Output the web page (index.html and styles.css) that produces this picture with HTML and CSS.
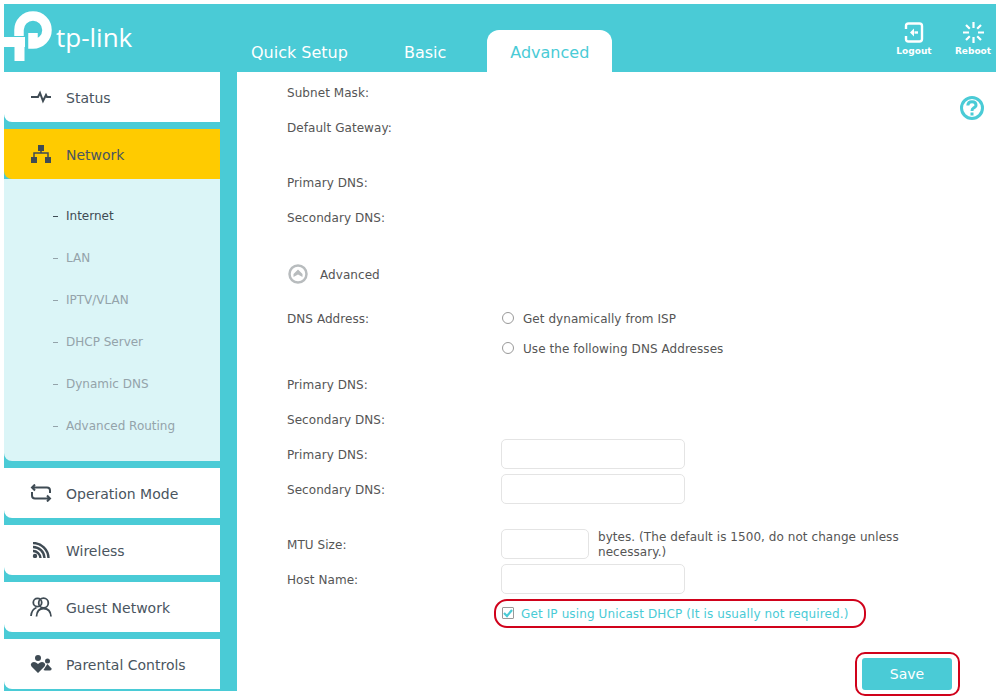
FILE: index.html
```html
<!DOCTYPE html>
<html lang="en">
<head>
    <meta charset="UTF-8">
    <title>TP-Link - Advanced - Internet</title>
    <link rel="stylesheet" href="styles.css">
</head>
<body>

    <header class="top-bar">
        <div class="logo">
            <svg class="logo-mark" width="50" height="56" viewBox="0 0 50 56">
                <path d="M0 37 H21 M15.500 37 V56" fill="none" stroke="#fff" stroke-width="10"/>
                <path d="M15 31 V25 A14 14 0 1 1 29 39 V28" fill="none" stroke="#fff" stroke-width="9.500"/>
            </svg>
            <span class="logo-text">tp-link</span>
        </div>

        <nav class="tabs">
            <a class="tab tab-quick">Quick Setup</a>
            <a class="tab tab-basic">Basic</a>
            <a class="tab tab-active">Advanced</a>
        </nav>

        <div class="top-actions">
            <a class="action">
                <svg width="20" height="21" viewBox="0 0 20 21" fill="none" stroke="#fff" stroke-width="2.400">
                    <path d="M2 7 V4 Q2 1.500 4.500 1.500 H15.500 Q18 1.500 18 4 V17 Q18 19.500 15.500 19.500 H4.500 Q2 19.500 2 17 V14"/>
                    <path d="M10 6.500 L6 10.500 L10 14.500 Z" fill="#fff" stroke="none"/>
                    <path d="M10.500 10.500 H14"/>
                </svg>
                <span>Logout</span>
            </a>
            <a class="action action-last">
                <svg width="21" height="21" viewBox="0 0 21 21" fill="none" stroke="#fff" stroke-width="2.200">
                    <path d="M10.500 0 V6 M10.500 15 V21 M0 10.500 H6 M15 10.500 H21 M3 3 L6.800 6.800 M18 3 L14.200 6.800 M3 18 L6.800 14.200 M18 18 L14.200 14.200"/>
                </svg>
                <span>Reboot</span>
            </a>
        </div>
    </header>

    <div class="layout">
        <aside class="sidebar">
            <a class="menu-item">
                <svg class="menu-icon" width="22" height="14" viewBox="0 0 22 14" fill="none" stroke="#3f4b54" stroke-width="2">
                    <path d="M1 7 H8 L10 3 L13 11 L16 5 L17 7 H21"/>
                </svg>
                <span class="menu-text">Status</span>
            </a>

            <a class="menu-item menu-item-active">
                <svg class="menu-icon" width="22" height="18" viewBox="0 0 22 18">
                    <path d="M8 0 H14 V6 H8 Z M1 12 H7 V18 H1 Z M15 12 H21 V18 H15 Z" fill="#3f4b54"/>
                    <path d="M4 12 V8 H18 V12 M11 6 V8" fill="none" stroke="#3f4b54" stroke-width="1.500"/>
                </svg>
                <span class="menu-text">Network</span>
            </a>
            <ul class="submenu">
                <li class="submenu-active">Internet</li>
                <li>LAN</li>
                <li>IPTV/VLAN</li>
                <li>DHCP Server</li>
                <li>Dynamic DNS</li>
                <li>Advanced Routing</li>
            </ul>

            <a class="menu-item">
                <svg class="menu-icon" width="22" height="18" viewBox="0 0 22 18" fill="none" stroke="#3f4b54" stroke-width="2">
                    <path d="M5 0.500 L2 3.500 L5 6.500 M2.500 3.500 H17 Q20 3.500 20 6.500 V9"/>
                    <path d="M2 8 V11.500 Q2 14.500 5 14.500 H19.500 M17 11.500 L20 14.500 L17 17.500"/>
                </svg>
                <span class="menu-text">Operation Mode</span>
            </a>
            <a class="menu-item">
                <svg class="menu-icon" width="22" height="16" viewBox="0 0 22 16" fill="none" stroke="#3f4b54" stroke-width="2.400">
                    <path d="M3 1 A15.500 15.500 0 0 1 18.500 16 M3 5 A11.500 11.500 0 0 1 14.500 16 M3 9 A7.500 7.500 0 0 1 10.500 16"/>
                    <circle cx="5" cy="14" r="2.200" fill="#3f4b54" stroke="none"/>
                </svg>
                <span class="menu-text">Wireless</span>
            </a>
            <a class="menu-item">
                <svg class="menu-icon" width="22" height="20" viewBox="0 0 22 20" fill="none" stroke="#3f4b54" stroke-width="1.800">
                    <circle cx="7.500" cy="5.500" r="4.200"/>
                    <circle cx="13.500" cy="6" r="4.800"/>
                    <path d="M1 19 Q1.500 12.500 6.500 10.500 M6.500 19.500 Q7 11.500 13.500 11.500 Q20.500 11.500 21 19.500"/>
                </svg>
                <span class="menu-text">Guest Network</span>
            </a>
            <a class="menu-item">
                <svg class="menu-icon" width="22" height="18" viewBox="0 0 22 18" fill="#3f4b54">
                    <circle cx="8" cy="3" r="3"/>
                    <path d="M8 18 L1.500 11.500 Q0 9.500 1.500 8 Q4.500 5.800 8 9 Q11.500 5.800 14.500 8 Q16 9.500 14.500 11.500 Z"/>
                    <circle cx="17.500" cy="6" r="2.500"/>
                    <path d="M17.500 9 L21.500 13.500 Q22 15.500 20 15.500 H15 L13.500 15 L16 11 Z"/>
                </svg>
                <span class="menu-text">Parental Controls</span>
            </a>
        </aside>

        <main class="content">
            <svg class="help" width="26" height="26" viewBox="0 0 26 26" fill="none" stroke="#4acbd6" stroke-width="3">
                <circle cx="13" cy="13" r="10.500"/>
                <path d="M8.800 10.500 Q9 6.800 13 6.800 Q17 6.800 17 10 Q17 12 14.500 13 Q13 13.800 13 16"/>
                <path d="M13 17.500 V20.500"/>
            </svg>

            <div class="row"><label class="field-label">Subnet Mask:</label></div>
            <div class="row"><label class="field-label">Default Gateway:</label></div>

            <div class="row row-group"><label class="field-label">Primary DNS:</label></div>
            <div class="row"><label class="field-label">Secondary DNS:</label></div>

            <div class="row row-advanced">
                <svg width="24" height="24" viewBox="0 0 24 24">
                    <circle cx="12" cy="12" r="8.500" fill="none" stroke="#b8bcbe" stroke-width="2.500"/>
                    <path d="M12 7.500 L16.500 12 V15 L12 12.500 L7.500 15 V12 Z" fill="#b8bcbe"/>
                </svg>
                <span class="field-text">Advanced</span>
            </div>

            <div class="row row-radio row-dns">
                <label class="field-label">DNS Address:</label>
                <label class="radio"><input type="radio" name="dns"><span class="field-text">Get dynamically from ISP</span></label>
            </div>
            <div class="row row-radio">
                <span class="field-label"></span>
                <label class="radio"><input type="radio" name="dns"><span class="field-text">Use the following DNS Addresses</span></label>
            </div>

            <div class="row row-after-radio"><label class="field-label">Primary DNS:</label></div>
            <div class="row"><label class="field-label">Secondary DNS:</label></div>
            <div class="row"><label class="field-label">Primary DNS:</label><input class="text-input" type="text"></div>
            <div class="row"><label class="field-label">Secondary DNS:</label><input class="text-input" type="text"></div>

            <div class="row row-group">
                <label class="field-label">MTU Size:</label>
                <input class="text-input text-input-small" type="text">
                <p class="hint">bytes. (The default is 1500, do not change unless necessary.)</p>
            </div>
            <div class="row"><label class="field-label">Host Name:</label><input class="text-input" type="text"></div>

            <label class="unicast">
                <span class="check">
                    <svg width="10" height="10" viewBox="0 0 10 10" fill="none" stroke="#4acbd6" stroke-width="2.200"><path d="M1 5 L4 8 L9 2"/></svg>
                </span>
                <span class="field-text">Get IP using Unicast DHCP (It is usually not required.)</span>
            </label>

            <div class="save-wrap">
                <button class="save-btn">Save</button>
            </div>
        </main>
    </div>

</body>
</html>
```

FILE: styles.css
```css
* { margin: 0; padding: 0; box-sizing: border-box; }

body {
    margin: 4px 4px 0;
    height: 696px;
    overflow: hidden;
    background: #fff;
    font-family: "DejaVu Sans", Verdana, sans-serif;
    font-size: 12px;
    color: #555;
}

/* --- TOP BAR --- */
.top-bar {
    height: 68px;
    background: #4acbd6;
    display: flex;
    align-items: flex-end;
    position: relative;
}

.logo {
    width: 223px;
    height: 68px;
    display: flex;
    align-items: flex-start;
    color: #fff;
}

.logo-mark { margin-top: 1px; flex-shrink: 0; }

.logo-text {
    font-family: "Open Sans", sans-serif;
    font-size: 26px;
    line-height: 30px;
    margin: 18px 0 0 2px;
}

.tabs { display: flex; height: 42px; }

.tab {
    font-size: 16px;
    line-height: 46px;
    color: #fff;
    padding: 0 24px;
    border-radius: 12px 12px 0 0;
}

.tab-basic { margin: 0 17px 0 8px; }
.tab-active { background: #fff; color: #4acbd6; padding: 0 23px; }

.top-actions {
    margin-left: auto;
    display: flex;
    align-self: flex-start;
    padding: 18px 0 0;
}

.action {
    width: 72px;
    display: flex;
    flex-direction: column;
    align-items: center;
    color: #fff;
    font-size: 9px;
    font-weight: bold;
    line-height: 14px;
}

.action-last { width: 46px; }

.action svg { margin-bottom: 1px; }

/* --- LAYOUT --- */
.layout { display: flex; align-items: flex-start; }

.sidebar {
    width: 233px;
    flex-shrink: 0;
    background: #4acbd6;
    padding: 0 17px 2px 0;
}

.menu-item {
    height: 50px;
    background: #fff;
    border-radius: 0 0 0 8px;
    display: flex;
    align-items: center;
    padding-left: 26px;
    font-size: 14px;
    color: #4a5560;
    position: relative;
    margin-bottom: 7px;
}

.sidebar .menu-item:last-child { margin-bottom: 0; }

.menu-icon { width: 22px; margin-right: 14px; flex-shrink: 0; }
.menu-text { padding-top: 2px; }

.menu-item-active {
    background: #ffcb00;
    margin-bottom: 0;
}

.submenu {
    list-style: none;
    background: #dbf5f7;
    border-radius: 0 0 0 8px;
    padding: 15px 0;
    margin-bottom: 7px;
}

.submenu li {
    height: 42px;
    line-height: 44px;
    padding-left: 62px;
    color: #94a3aa;
    position: relative;
}

.submenu li::before {
    content: "";
    position: absolute;
    left: 49px;
    top: 22px;
    width: 5px;
    height: 1px;
    background: #94a3aa;
}

.submenu .submenu-active { color: #3f4b54; }
.submenu .submenu-active::before { background: #3f4b54; }

/* --- FORM --- */
.content {
    flex: 1;
    padding: 2px 36px 0 50px;
    position: relative;
    letter-spacing: 0.06px;
}

.help { position: absolute; top: 23px; right: 11px; }

.row {
    height: 35px;
    display: flex;
    align-items: center;
}

.row-group { margin-top: 20px; }

.row-advanced {
    margin-top: 22.500px;
    margin-left: -1px;
    gap: 10px;
}

.row-radio { height: 30px; }
.row-dns { margin-top: 11.500px; }
.row-after-radio { margin-top: 3.500px; }

.field-label { width: 214px; flex-shrink: 0; padding-top: 2px; }
.field-text { padding-top: 2px; }

.radio { display: flex; align-items: center; gap: 9px; margin-left: 1px; }

.radio input {
    appearance: none;
    width: 12px;
    height: 12px;
    border: 1px solid #999;
    border-radius: 50%;
    background: #fff;
}

.text-input {
    width: 184px;
    height: 30px;
    border: 1px solid #e4e4e4;
    border-radius: 5px;
    background: #fff;
    outline: none;
}

.text-input-small { width: 88px; }

.hint {
    width: 320px;
    margin-left: 9px;
    padding-top: 2px;
    line-height: 15px;
}

.unicast {
    width: 372px;
    height: 29px;
    margin: 2px 0 0 207px;
    padding-left: 6px;
    display: flex;
    align-items: center;
    gap: 7px;
    border: 2px solid #d0021b;
    border-radius: 13px;
    color: #4acbd6;
    letter-spacing: 0.12px;
}

.check {
    width: 12px;
    height: 12px;
    border: 1px solid #999;
    border-radius: 1px;
    display: flex;
    align-items: center;
    justify-content: center;
}

.save-wrap {
    width: 105px;
    height: 44px;
    margin: 24px 0 0 auto;
    padding-left: 5px;
    border: 2px solid #d0021b;
    border-radius: 10px;
    display: flex;
    align-items: center;
}

.save-btn {
    width: 90px;
    height: 32px;
    border: none;
    border-radius: 3px;
    background: #4acbd6;
    color: #fff;
    font-family: inherit;
    font-size: 14px;
}
```
